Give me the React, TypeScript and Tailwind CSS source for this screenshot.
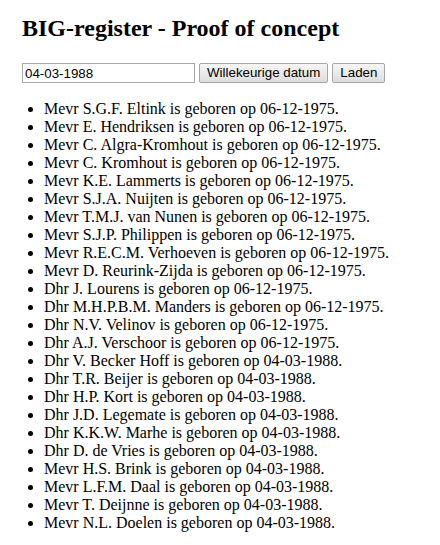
import { useState } from "react";

const people: { name: string; date: string }[] = [
  { name: "Mevr S.G.F. Eltink", date: "06-12-1975" },
  { name: "Mevr E. Hendriksen", date: "06-12-1975" },
  { name: "Mevr C. Algra-Kromhout", date: "06-12-1975" },
  { name: "Mevr C. Kromhout", date: "06-12-1975" },
  { name: "Mevr K.E. Lammerts", date: "06-12-1975" },
  { name: "Mevr S.J.A. Nuijten", date: "06-12-1975" },
  { name: "Mevr T.M.J. van Nunen", date: "06-12-1975" },
  { name: "Mevr S.J.P. Philippen", date: "06-12-1975" },
  { name: "Mevr R.E.C.M. Verhoeven", date: "06-12-1975" },
  { name: "Mevr D. Reurink-Zijda", date: "06-12-1975" },
  { name: "Dhr J. Lourens", date: "06-12-1975" },
  { name: "Dhr M.H.P.B.M. Manders", date: "06-12-1975" },
  { name: "Dhr N.V. Velinov", date: "06-12-1975" },
  { name: "Dhr A.J. Verschoor", date: "06-12-1975" },
  { name: "Dhr V. Becker Hoff", date: "04-03-1988" },
  { name: "Dhr T.R. Beijer", date: "04-03-1988" },
  { name: "Dhr H.P. Kort", date: "04-03-1988" },
  { name: "Dhr J.D. Legemate", date: "04-03-1988" },
  { name: "Dhr K.K.W. Marhe", date: "04-03-1988" },
  { name: "Dhr D. de Vries", date: "04-03-1988" },
  { name: "Mevr H.S. Brink", date: "04-03-1988" },
  { name: "Mevr L.F.M. Daal", date: "04-03-1988" },
  { name: "Mevr T. Deijnne", date: "04-03-1988" },
  { name: "Mevr N.L. Doelen", date: "04-03-1988" },
];

const buttonClass =
  "h-[20px] px-[7px] text-[13.33px] leading-none text-black border border-[#a6a6a6] rounded-[2px] bg-gradient-to-b from-[#f6f6f6] to-[#dedede]";

export default function App() {
  const [date, setDate] = useState("04-03-1988");

  return (
    <div className="bg-white text-black px-[22px] pb-4 font-['Liberation_Serif',serif] min-h-[545px]">
      {/* Title */}
      <h1 className="pt-[14px] text-[24px] leading-[28px] font-bold">
        BIG-register - Proof of concept
      </h1>

      {/* Controls */}
      <div className="mt-[21px] flex items-center gap-[4px] font-['Liberation_Sans',Arial,sans-serif]">
        <input
          value={date}
          onChange={(e) => setDate(e.target.value)}
          className="w-[173px] h-[20px] px-[2px] text-[13.33px] border border-[#a9a9a9] outline-none"
        />
        <button className={buttonClass}>Willekeurige datum</button>
        <button className={buttonClass}>Laden</button>
      </div>

      {/* Results */}
      <ul className="mt-[17px] pl-[22px] list-disc text-[16px] leading-[18px]">
        {people.map((p) => (
          <li key={p.name}>
            {p.name} is geboren op {p.date}.
          </li>
        ))}
      </ul>
    </div>
  );
}
